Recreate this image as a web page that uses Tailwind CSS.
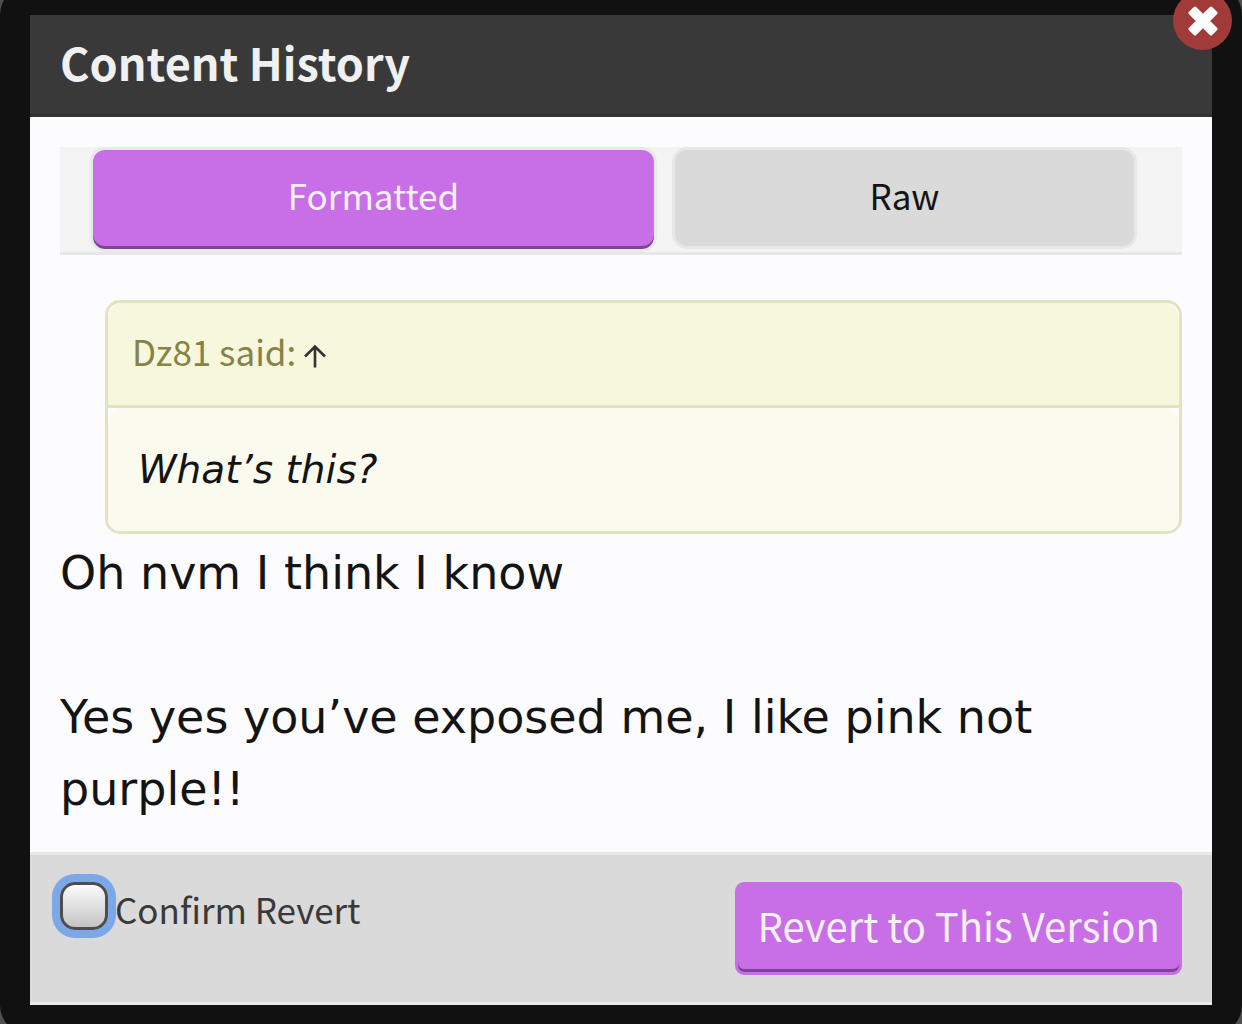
<!DOCTYPE html>
<html lang="en">
<head>
  <meta charset="UTF-8">
  <meta name="viewport" content="width=device-width, initial-scale=1.0">
  <title>Content History</title>
  <script src="https://cdn.jsdelivr.net/npm/@tailwindcss/browser@4"></script>
</head>
<body class="bg-[#4f4f4f] overflow-hidden font-['Noto_Sans_CJK_SC',sans-serif] text-[#141414]">
  <div class="-mt-[15px] bg-[#111111] rounded-[30px] p-[30px]">
    <div class="relative bg-[#fcfcff]" role="dialog" aria-labelledby="title">
      <!-- Header -->
      <header class="bg-[#393939] border-b-3 border-[#333333] px-[30px] pb-[6px]">
        <h1 id="title" class="text-[45px] leading-[93px] font-bold text-[#f0f0f0]">Content History</h1>
      </header>
      <button type="button" aria-label="Close" class="absolute -top-6 -right-5 size-[59px] rounded-full bg-[#a03b39] flex items-center justify-center">
        <svg class="size-[30px]" viewBox="0 0 30 30" fill="#fff" stroke="#fff" stroke-width="3.4" stroke-linejoin="round">
          <path d="M7 2.2 15 10.2 23 2.2 27.8 7 19.8 15 27.8 23 23 27.8 15 19.8 7 27.8 2.2 23 10.2 15 2.2 7Z"/>
        </svg>
      </button>

      <main class="px-[30px] pt-[30px] pb-[27px]">
        <!-- Tabs -->
        <div role="tablist" class="flex items-start gap-[15px] bg-[#f3f3f3] border-b-3 border-[#e7e7e7] pl-[30px] pr-[45px] text-[35px] leading-[90px]">
          <button type="button" role="tab" aria-selected="true" class="flex-11 pb-[9px] rounded-[15px] border-3 border-[#e8e8e8] bg-[#c86fe8] text-[#f3f0f3] shadow-[inset_0_-3px_0_#7b4590]">Formatted</button>
          <button type="button" role="tab" aria-selected="false" class="flex-9 pb-[6px] rounded-[15px] border-3 border-[#e7e7e7] bg-[#dadada]">Raw</button>
        </div>

        <!-- Quoted message -->
        <blockquote class="mt-[45px] ml-[45px] border-3 border-[#e3e4bf] rounded-[15px]">
          <div class="flex items-center gap-2 rounded-t-[15px] bg-[#f7f7dd] border-b-3 border-[#e3e4bf] px-6 pb-[6px] text-[35px] leading-[96px] text-[#858347]">
            <span>Dz81 said:</span>
            <a href="#message" aria-label="Go to quoted message">
              <svg class="w-[22px] h-[24px] mt-2.5" viewBox="0 0 22 24" fill="none" stroke="#333" stroke-width="2.6">
                <path d="M11 23.5V3M1 12.5 11 2.5 21 12.5"/>
              </svg>
            </a>
          </div>
          <div class="rounded-[15px] bg-[#fafaee] px-[30px] font-['DejaVu_Sans',sans-serif] italic text-[39px] leading-[123px]">What’s this?</div>
        </blockquote>

        <div id="message" class="pt-[3px] font-['DejaVu_Sans',sans-serif] text-[46px] leading-[72px]">
          <p>Oh nvm I think I know</p>
          <p class="mt-[72px]">Yes yes you’ve exposed me, I like pink not purple!!</p>
        </div>
      </main>

      <!-- Footer -->
      <footer class="flex items-start justify-between bg-[#dadada] border-y-3 border-[#e7e8e7] px-[30px] py-[27px]">
        <div class="flex items-start gap-[7px]">
          <input type="checkbox" id="confirm" class="appearance-none size-12 rounded-[15px] border-3 border-[#4d4d4d] bg-linear-to-b from-[#fbfbfb] to-[#c4c4c4] ring-8 ring-[#7aa8e8]">
          <label for="confirm" class="text-[35px] leading-[54px] text-[#393939]">Confirm Revert</label>
        </div>
        <button type="button" class="rounded-[9px] border-3 border-[#c86fe8] bg-[#c86fe8] px-[19px] pb-[6px] text-[40px] leading-[81px] text-[#f3f0f3] shadow-[inset_0_-3px_0_#7b4590]">Revert to This Version</button>
      </footer>
    </div>
  </div>
</body>
</html>
